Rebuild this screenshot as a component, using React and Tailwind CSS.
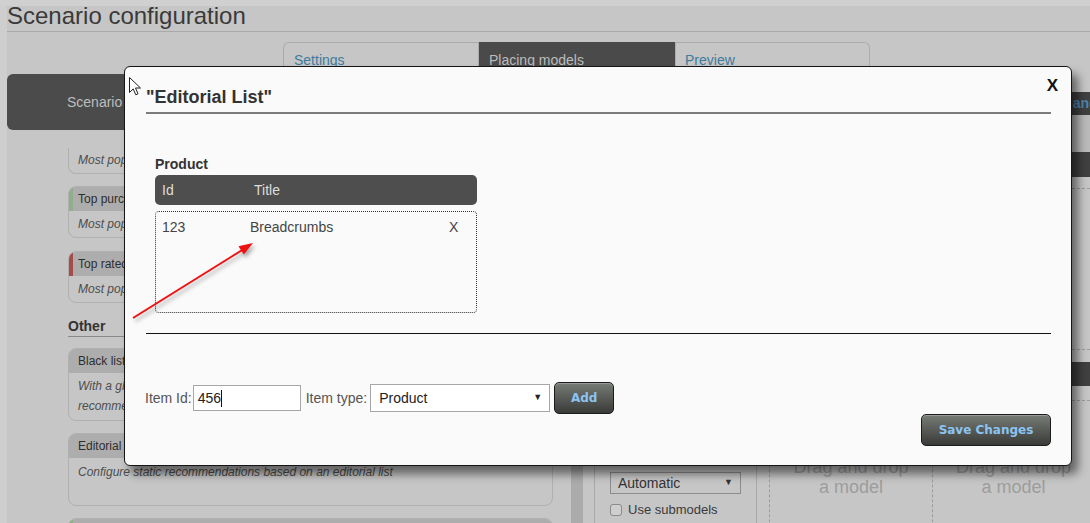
import React from "react";

function Card({ title, stripe, children, bodyClass }) {
  return (
    <div className="border border-[#b0b0b0] rounded-[8px] overflow-hidden">
      <div className="h-[24px] bg-[#adadad] flex items-stretch">
        {stripe ? <div className={`w-[4px] shrink-0 ${stripe}`} /> : <div className="w-[4px] shrink-0" />}
        <div className="pl-[5px] flex items-center text-[12px] text-[#2e2e2e]">{title}</div>
      </div>
      <div className={`pl-[9px] italic text-[12px] text-[#4d4d4d] ${bodyClass}`}>{children}</div>
    </div>
  );
}

function DarkButton({ children, className }) {
  return (
    <div
      className={`shrink-0 flex items-center justify-center rounded-[5px] border border-[#1c1c1c] bg-linear-to-b from-[#787c76] to-[#393b38] shadow-[inset_0_1px_0_rgba(255,255,255,0.25)] font-['DejaVu_Sans',sans-serif] font-bold text-[12px] text-[#8cc4f2] ${className}`}
    >
      {children}
    </div>
  );
}

function DropCell({ last }) {
  return (
    <div
      className={`shrink-0 w-[163px] h-[162px] border-y border-l border-dashed border-[#9c9c9c] ${last ? "border-r" : ""} pt-[56px] text-center text-[18px] leading-[20px] text-[#9d9d9d]`}
    >
      Drag and drop
      <br />a model
    </div>
  );
}

export default function App() {
  return (
    <div className="relative w-[1090px] h-[523px] overflow-hidden bg-[#c6c6c6] font-['Liberation_Sans',Arial,sans-serif]">
      <div className="h-[6px] bg-[#d0d0d0]" />
      <div className="flex items-start">
        <div className="w-[7px] h-[517px] shrink-0 bg-[#cecece]" />
        <div className="w-[1083px] shrink-0">
          <div className="h-[26px] border-b border-[#a9a9a9] text-[24px] leading-[20px] text-[#3a3a3a]">
            Scenario configuration
          </div>
          {/* Tabs */}
          <div className="mt-[10px] pl-[276px] flex h-[32px]">
            <div className="w-[196px] shrink-0 border border-b-0 border-[#ababab] rounded-tl-[6px] pl-[10px] pt-[9px] text-[14px] leading-[16px] text-[#3d7c9d]">
              Settings
            </div>
            <div className="w-[196px] shrink-0 bg-[#4a4a4a] pl-[10px] pt-[10px] text-[14px] leading-[16px] text-[#bcbcbc]">
              Placing models
            </div>
            <div className="w-[195px] shrink-0 border border-b-0 border-[#ababab] rounded-tr-[6px] pl-[9px] pt-[9px] text-[14px] leading-[16px] text-[#3d7c9d]">
              Preview
            </div>
          </div>
          {/* Body */}
          <div className="flex items-stretch">
            {/* Left column */}
            <div className="w-[546px] shrink-0">
              <div className="h-[56px] rounded-[6px] bg-[#4b4b4b] flex items-center pl-[60px] text-[14px] text-[#bdbdbd]">
                Scenario models
              </div>
              <div className="ml-[61px] w-[485px]">
                <div className="mt-[18px] h-[26px] border border-t-0 border-[#b0b0b0] rounded-b-[8px] pl-[9px] pt-[4px] italic text-[12px] leading-[16px] text-[#4d4d4d]">
                  Most popular items in the shop
                </div>
                <div className="mt-[12px]">
                  <Card title="Top purchased" stripe="bg-[#8fae8a]" bodyClass="h-[26px] flex items-center">
                    Most popular purchased items
                  </Card>
                </div>
                <div className="mt-[13px]">
                  <Card title="Top rated" stripe="bg-[#a44c4a]" bodyClass="h-[26px] flex items-center">
                    Most popular rated items
                  </Card>
                </div>
                <div className="mt-[15px] h-[19px] border-b border-[#8a8a8a] text-[14px] leading-[16px] font-bold text-[#333]">
                  Other
                </div>
                <div className="mt-[11px]">
                  <Card title="Black list" bodyClass="pt-[3px] pb-[4px] leading-[20px]">
                    With a global black list you can exclude items from all
                    <br />
                    recommendations
                  </Card>
                </div>
                <div className="mt-[12px]">
                  <Card title="Editorial list" bodyClass="h-[47px] pt-[6px] leading-[16px]">
                    Configure static recommendations based on an editorial list
                  </Card>
                </div>
                <div className="mt-[12px]">
                  <Card title="Cross sell" stripe="bg-[#8fae8a]" bodyClass="h-[26px]">
                    {" "}
                  </Card>
                </div>
              </div>
            </div>
            {/* Right area */}
            <div className="flex w-[537px] shrink-0">
              <div className="w-[18px] shrink-0" />
              <div className="w-[12px] shrink-0 bg-[#ababab]" />
              <div className="w-[11px] shrink-0" />
              <div className="w-[496px] shrink-0 border-l border-[#a9a9a9]">
                <div className="h-[18px]" />
                <div className="h-[23px] bg-[#404040] flex items-center pl-[459px] text-[14px] font-bold text-[#4f84ad] whitespace-nowrap overflow-hidden">
                  Change
                </div>
                <div className="h-[37px] bg-[#bababa]" />
                <div className="h-[25px] bg-[#404040]" />
                <div className="h-[185px] flex">
                  <div className="w-[162px] shrink-0 border-r border-[#a9a9a9]" />
                  <div className="ml-[12px] mt-[11px] flex">
                    <DropCell />
                    <DropCell last />
                  </div>
                </div>
                <div className="h-[24px] bg-[#404040]" />
                <div className="flex h-[200px]">
                  <div className="w-[162px] shrink-0 border-r border-[#a9a9a9] pl-[15px] pt-[86px]">
                    <div className="w-[131px] h-[22px] border border-[#8c8c8c] flex items-center justify-between pl-[7px] pr-[7px] text-[14px] text-[#333]">
                      <span>Automatic</span>
                      <span className="text-[9px]">▼</span>
                    </div>
                    <div className="mt-[6px] flex items-center gap-[6px] text-[13px] text-[#3a3a3a]">
                      <div className="w-[12px] h-[12px] shrink-0 border border-[#8a8a8a] rounded-[3px] bg-[#cfcfcf]" />
                      <span>Use submodels</span>
                    </div>
                  </div>
                  <div className="ml-[12px] mt-[14px] flex">
                    <DropCell />
                    <DropCell last />
                  </div>
                </div>
              </div>
            </div>
          </div>
        </div>
      </div>

      {/* Modal */}
      <div className="absolute left-[124px] top-[66px] w-[948px] h-[400px] border border-[#151515] rounded-[6px] bg-[#fafafa] shadow-[6px_8px_10px_rgba(0,0,0,0.5)]">
        <div className="h-[45px] flex justify-between items-start pl-[21px] pr-[13px]">
          <div className="mt-[20px] text-[18px] leading-[20px] font-bold text-[#333]">"Editorial List"</div>
          <div className="mt-[11px] text-[17px] leading-[16px] font-bold text-[#111]">X</div>
        </div>
        <div className="ml-[21px] mr-[20px] h-[2px] bg-[#7c7c7c]" />
        <div className="pl-[30px]">
          <div className="mt-[42px] text-[14px] leading-[16px] font-bold text-[#333]">Product</div>
          <div className="mt-[3px] w-[322px] h-[30px] rounded-[5px] bg-[#4e4e4e] flex items-center pl-[7px] text-[14px] text-[#dddddd]">
            <div className="w-[92px]">Id</div>
            <div>Title</div>
          </div>
          <div className="mt-[6px] w-[322px] h-[102px] border border-dotted border-[#333] rounded-[4px] pl-[6px] pt-[7px]">
            <div className="flex text-[14px] leading-[16px] text-[#444]">
              <div className="w-[88px]">123</div>
              <div className="w-[199px]">Breadcrumbs</div>
              <div>X</div>
            </div>
          </div>
        </div>
        <div className="mt-[20px] ml-[21px] mr-[20px] h-[1px] bg-[#111]" />
        <div className="mt-[48px] h-[32px] flex items-center pl-[20px] text-[14px]">
          <span className="text-[#555]">Item Id:</span>
          <div className="ml-[1px] w-[108px] h-[26px] border border-[#a6a6a6] bg-white flex items-center pl-[4px] text-[#222]">
            456<span className="inline-block w-[1px] h-[17px] bg-[#111]" />
          </div>
          <span className="ml-[5px] text-[#555]">Item type:</span>
          <div className="ml-[3px] w-[180px] h-[28px] border border-[#a6a6a6] bg-white flex items-center justify-between pl-[8px] pr-[7px] text-[#222]">
            <span>Product</span>
            <span className="text-[9px]">▼</span>
          </div>
          <DarkButton className="ml-[4px] w-[60px] h-[32px]">Add</DarkButton>
        </div>
        <div className="flex justify-end pr-[20px]">
          <DarkButton className="w-[130px] h-[32px]">Save Changes</DarkButton>
        </div>
      </div>

      {/* Mouse cursor */}
      <svg className="absolute left-[129px] top-[77px]" width="13" height="20" viewBox="0 0 13 20">
        <path d="M0.5 0.5 L0.5 15.5 L4.2 11.9 L6.8 17.8 L9 16.8 L6.5 11 L11.5 11 Z" fill="#ffffff" stroke="#222" strokeWidth="1" strokeLinejoin="round" />
      </svg>

      {/* Red arrow annotation */}
      <svg
        className="absolute left-[120px] top-[235px] drop-shadow-[2px_3px_2px_rgba(0,0,0,0.35)]"
        width="145"
        height="95"
        viewBox="0 0 145 95"
      >
        <line x1="13" y1="83" x2="123" y2="14.5" stroke="#ee1111" strokeWidth="2" />
        <polygon points="133,8 123.8,19.6 118.5,11.2" fill="#ee1111" />
      </svg>
    </div>
  );
}
